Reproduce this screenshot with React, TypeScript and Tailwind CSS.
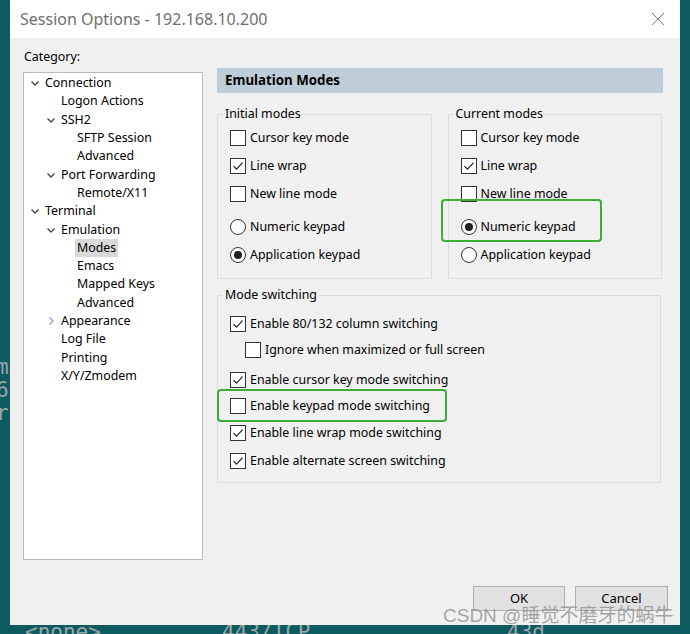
import { ReactNode } from 'react';

const font = { fontFamily: '"Noto Sans", "Segoe UI", sans-serif' };

function Chevron({ open, light }: { open: boolean; light?: boolean }) {
  return (
    <svg width="10" height="10" viewBox="0 0 10 10" className="shrink-0">
      {open ? (
        <path d="M1.5 3.5 L5 7 L8.5 3.5" fill="none" stroke={light ? '#9a9a9a' : '#444'} strokeWidth="1.3" />
      ) : (
        <path d="M3.5 1.5 L7 5 L3.5 8.5" fill="none" stroke={light ? '#9a9a9a' : '#444'} strokeWidth="1.3" />
      )}
    </svg>
  );
}

type TreeItem = { label: string; level: number; chevron?: 'open' | 'closed'; selected?: boolean };

const tree: TreeItem[] = [
  { label: 'Connection', level: 0, chevron: 'open' },
  { label: 'Logon Actions', level: 1 },
  { label: 'SSH2', level: 1, chevron: 'open' },
  { label: 'SFTP Session', level: 2 },
  { label: 'Advanced', level: 2 },
  { label: 'Port Forwarding', level: 1, chevron: 'open' },
  { label: 'Remote/X11', level: 2 },
  { label: 'Terminal', level: 0, chevron: 'open' },
  { label: 'Emulation', level: 1, chevron: 'open' },
  { label: 'Modes', level: 2, selected: true },
  { label: 'Emacs', level: 2 },
  { label: 'Mapped Keys', level: 2 },
  { label: 'Advanced', level: 2 },
  { label: 'Appearance', level: 1, chevron: 'closed' },
  { label: 'Log File', level: 1 },
  { label: 'Printing', level: 1 },
  { label: 'X/Y/Zmodem', level: 1 },
];

const indent = ['pl-[6px]', 'pl-[22px]', 'pl-[38px]'];

function Checkbox({ checked }: { checked: boolean }) {
  return (
    <span className="w-[16px] h-[16px] border border-[#333] bg-white shrink-0 flex items-center justify-center">
      {checked && (
        <svg width="14" height="14" viewBox="0 0 14 14">
          <path d="M2.5 7.2 L5.5 10.2 L11.5 3.6" fill="none" stroke="#222" strokeWidth="1.2" />
        </svg>
      )}
    </span>
  );
}

function Radio({ checked }: { checked: boolean }) {
  return (
    <span className="w-[16px] h-[16px] rounded-full border border-[#333] bg-white shrink-0 flex items-center justify-center">
      {checked && <span className="w-[8px] h-[8px] rounded-full bg-[#222]" />}
    </span>
  );
}

function Row({ children, className = '' }: { children: ReactNode; className?: string }) {
  return <div className={`flex items-center gap-[4px] ${className}`}>{children}</div>;
}

function Group({ title, className, children }: { title: string; className: string; children: ReactNode }) {
  return (
    <fieldset className={`border border-[#dcdcdc] ${className}`}>
      <legend className="ml-[5px] px-[2px] leading-[16px]">{title}</legend>
      {children}
    </fieldset>
  );
}

function ModeGroup({ title, numeric, highlight }: { title: string; numeric: boolean; highlight?: boolean }) {
  return (
    <Group title={title} className="flex-1">
      <div className="pl-[12px] pt-[2px] pb-[9px]">
        <Row className="h-[28px]"><Checkbox checked={false} /><span>Cursor key mode</span></Row>
        <Row className="h-[28px]"><Checkbox checked /><span>Line wrap</span></Row>
        <Row className="h-[28px]"><Checkbox checked={false} /><span>New line mode</span></Row>
        <div className="relative mt-[5px]">
          {highlight && (
            <div className="absolute left-[-20px] top-[-14px] w-[161px] h-[43px] border-2 border-[#3aad3a] rounded-[4px]" />
          )}
          <Row className="h-[28px]"><Radio checked={numeric} /><span>Numeric keypad</span></Row>
        </div>
        <Row className="h-[28px]"><Radio checked={!numeric} /><span>Application keypad</span></Row>
      </div>
    </Group>
  );
}

export default function App() {
  return (
    <div className="relative w-[690px] h-[634px] bg-[#0d5a61] overflow-hidden text-[12.4px] text-black" style={font}>
      {/* terminal text behind the dialog */}
      <div className="absolute inset-0 text-[#9aa6a8] text-[21px] leading-[23px]" style={{ fontFamily: '"DejaVu Sans Mono", monospace' }}>
        <span className="absolute left-[-4px] top-[356px]">m</span>
        <span className="absolute left-[-4px] top-[379px]">6</span>
        <span className="absolute left-[-4px] top-[402px]">r</span>
        <span className="absolute left-[25px] top-[621px]">&lt;none&gt;</span>
        <span className="absolute left-[222px] top-[621px]">443/TCP</span>
        <span className="absolute left-[507px] top-[621px]">43d</span>
      </div>

      <div className="relative ml-[10px] w-[670px] h-[625px] bg-[#f0f0f0] flex flex-col">
        <div className="h-[38px] bg-white flex items-center justify-between pl-[10px] pr-[15px]">
          <span className="text-[16px] text-[#6f6f6f]">Session Options - 192.168.10.200</span>
          <svg width="14" height="14" viewBox="0 0 14 14">
            <path d="M1 1 L13 13 M13 1 L1 13" stroke="#777" strokeWidth="1" />
          </svg>
        </div>

        <div className="flex flex-1 pl-[13px]">
          <div className="flex flex-col w-[180px]">
            <div className="mt-[10px] h-[17px] leading-[17px] pl-[1px]">Category:</div>
            <div className="mt-[7px] h-[488px] bg-white border border-[#b8b8c0] pt-[1px]">
              {tree.map((t, i) => (
                <div key={i} className={`h-[18.3px] flex items-center ${indent[t.level]}`}>
                  <span className="w-[13px] flex items-center">
                    {t.chevron && <Chevron open={t.chevron === 'open'} light={t.chevron === 'closed'} />}
                  </span>
                  <span className={`px-[2px] leading-[18px] ${t.selected ? 'bg-[#d9d9d9]' : ''}`}>{t.label}</span>
                </div>
              ))}
            </div>
          </div>

          <div className="ml-[14px] w-[446px] flex flex-col">
            <div className="mt-[30px] h-[25px] bg-[#bfcdd9] flex items-center pl-[8px] font-bold text-[13.3px]">
              Emulation Modes
            </div>
            <div className="mt-[13px] flex gap-[16px] pr-[1px]">
              <ModeGroup title="Initial modes" numeric={false} />
              <ModeGroup title="Current modes" numeric highlight />
            </div>
            <Group title="Mode switching" className="mt-[8px] mr-[2px]">
              <div className="pl-[12px] pt-[8px] pb-[8px]">
                <Row className="h-[26px]"><Checkbox checked /><span>Enable 80/132 column switching</span></Row>
                <Row className="h-[26px] pl-[15px]"><Checkbox checked={false} /><span>Ignore when maximized or full screen</span></Row>
                <Row className="h-[26px] mt-[4px]"><Checkbox checked /><span>Enable cursor key mode switching</span></Row>
                <div className="relative">
                  <div className="absolute left-[-13px] top-[-4px] w-[230px] h-[33px] border-2 border-[#3aad3a] rounded-[4px]" />
                  <Row className="h-[26px]"><Checkbox checked={false} /><span>Enable keypad mode switching</span></Row>
                </div>
                <Row className="h-[26px] mt-[1px]"><Checkbox checked /><span>Enable line wrap mode switching</span></Row>
                <Row className="h-[26px] mt-[2px]"><Checkbox checked /><span>Enable alternate screen switching</span></Row>
              </div>
            </Group>

            <div className="mt-auto mb-[14px] flex justify-end gap-[10px] -mr-[5px]">
              <button className="w-[92px] h-[25px] bg-[#e1e1e1] border border-[#adadad] text-[13px]">OK</button>
              <button className="w-[93px] h-[25px] bg-[#e1e1e1] border border-[#adadad] text-[13px]">Cancel</button>
            </div>
          </div>
        </div>
      </div>

      {/* watermark */}
      <div
        className="absolute left-[443px] top-[605px] text-[19px] leading-[22px] text-[rgba(150,150,150,0.85)] whitespace-nowrap"
        style={{ fontFamily: '"Liberation Sans", "Noto Sans CJK SC", sans-serif' }}
      >
        CSDN @睡觉不磨牙的蜗牛
      </div>
    </div>
  );
}
